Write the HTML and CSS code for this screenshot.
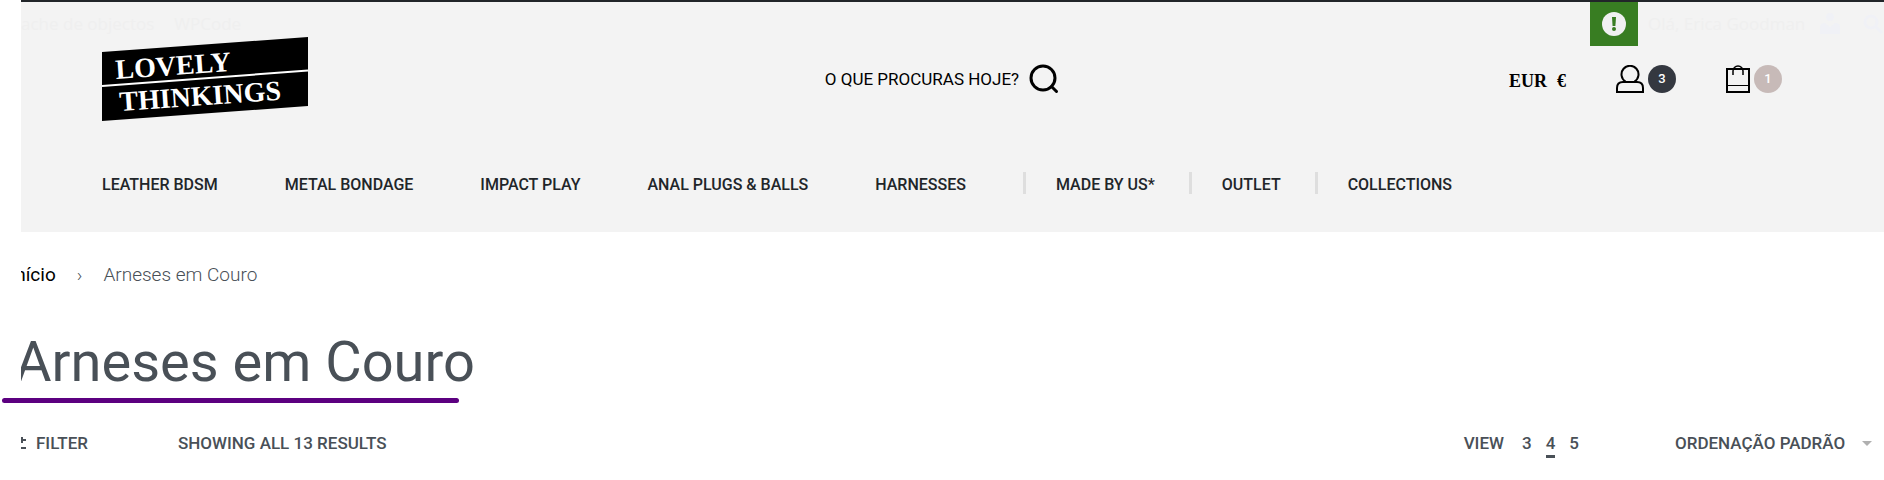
FILE: index.html
```html
<!DOCTYPE html>
<html lang="pt">
<head>
<meta charset="UTF-8">
<meta name="viewport" content="width=device-width, initial-scale=1.0">
<title>Arneses em Couro - Lovely Thinkings</title>
<link rel="stylesheet" href="styles.css">
</head>
<body>

<!-- Header -->
<header class="site-header">
    <div class="admin-bar">
        <a href="#" class="admin-cache">ache de objectos</a>
        <a href="#">WPCode</a>
        <a href="#" class="admin-notice" aria-label="Avisos">
            <svg width="24" height="24" viewBox="0 0 24 24">
                <circle cx="12" cy="12" r="12" fill="#f0f0f1"/>
                <path d="M10 5h4l-.6 9h-2.800z" fill="#387d22"/>
                <circle cx="12" cy="17" r="2" fill="#387d22"/>
            </svg>
        </a>
        <a href="#" class="admin-user">Olá, Erica Goodman</a>
        <svg class="admin-avatar" width="24" height="24" viewBox="0 0 24 24" fill="#f0f1f6">
            <circle cx="12" cy="5" r="4"/>
            <path d="M2 22v-7q0-4 5-4l5 4 5-4q5 0 5 4v7z"/>
        </svg>
        <svg width="22" height="22" viewBox="0 0 22 22" fill="none" stroke="#f0f1f6" stroke-width="3">
            <circle cx="9" cy="9" r="6"/>
            <path d="M13 13l7 7"/>
        </svg>
    </div>

    <div class="header-main">
        <a href="#" class="logo" aria-label="Lovely Thinkings">
            <svg width="206" height="84" viewBox="0 0 206 84">
                <polygon points="0,15 206,0 206,69 0,84" fill="#000"/>
                <path d="M0 49L206 33.500" stroke="#fff" stroke-width="2"/>
                <text transform="translate(14 42) rotate(-4)" class="logo-text">LOVELY</text>
                <text transform="translate(18 74) rotate(-4)" class="logo-text">THINKINGS</text>
            </svg>
        </a>
        <button type="button" class="search">
            O QUE PROCURAS HOJE?
            <svg width="30" height="30" viewBox="0 0 30 30" fill="none" stroke="#000" stroke-width="3" stroke-linecap="round">
                <circle cx="14" cy="14" r="12"/>
                <path d="M22.500 22.500l5 5"/>
            </svg>
        </button>
        <div class="header-tools">
            <button type="button" class="currency"><span>EUR</span><span>€</span></button>
            <a href="#" class="tool" aria-label="Conta">
                <svg width="28" height="28" viewBox="0 0 28 28" fill="none" stroke="#000" stroke-width="2">
                    <path d="M9.500 16.500a8.500 8.500 0 1 1 9 0"/>
                    <path d="M1 27v-4q0-6 6-6h14q6 0 6 6v4z"/>
                </svg>
                <span class="badge">3</span>
            </a>
            <a href="#" class="tool" aria-label="Carrinho">
                <svg width="24" height="28" viewBox="0 0 24 28" fill="none" stroke="#000">
                    <rect x="1" y="4" width="22" height="23" stroke-width="2"/>
                    <path d="M1 20.500h22"/>
                    <path d="M7 10V6a5 5 0 0 1 10 0v4" stroke-width="1.500"/>
                </svg>
                <span class="badge badge-cart">1</span>
            </a>
        </div>
    </div>

    <nav class="main-nav">
        <a href="#">LEATHER BDSM</a>
        <a href="#">METAL BONDAGE</a>
        <a href="#">IMPACT PLAY</a>
        <a href="#">ANAL PLUGS &amp; BALLS</a>
        <a href="#">HARNESSES</a>
        <div class="nav-extra">
            <a href="#">MADE BY US*</a>
            <a href="#">OUTLET</a>
            <a href="#">COLLECTIONS</a>
        </div>
    </nav>
</header>

<!-- Main Content -->
<main>
    <div class="clip">
        <nav class="breadcrumb">
            <a href="#">Início</a>
            <span>›</span>
            <span>Arneses em Couro</span>
        </nav>
        <h1>Arneses em Couro</h1>
    </div>
    <hr class="title-line">
    <div class="clip toolbar">
        <button type="button" class="filter">
            <svg width="16" height="14" viewBox="0 0 16 14" fill="none" stroke="#495057" stroke-width="2">
                <path d="M0 4h16M12 1v6M0 12h16"/>
            </svg>
            FILTER
        </button>
        <p class="results">SHOWING ALL 13 RESULTS</p>
        <div class="view">
            <span>VIEW</span>
            <a href="#">3</a>
            <a href="#" class="active">4</a>
            <a href="#">5</a>
        </div>
        <div class="sort">
            <select aria-label="Ordenar">
                <option>ORDENAÇÃO PADRÃO</option>
            </select>
        </div>
    </div>
</main>

</body>
</html>
```
FILE: styles.css
```css
* {
    box-sizing: border-box;
}

body {
    margin: 0;
    background: #fff;
    color: #495057;
    font-family: Roboto, sans-serif;
    font-size: 17px;
    line-height: 24px;
}

a {
    color: inherit;
    text-decoration: none;
}

button,
select {
    font: inherit;
    color: inherit;
    background: none;
    border: none;
    padding: 0;
    cursor: pointer;
}

svg {
    display: block;
    flex: none;
}

.site-header {
    margin-left: 21px;
    padding-bottom: 35px;
    background: #f3f3f3;
    border-top: 2px solid #212529;
    overflow: hidden;
}

/* Admin bar */
.admin-bar {
    display: flex;
    align-items: center;
    height: 44px;
    color: #efefef;
    font-family: "Open Sans", sans-serif;
    font-size: 17px;
}

.admin-cache {
    margin-right: 20px;
}

.admin-notice {
    display: flex;
    align-items: center;
    justify-content: center;
    width: 48px;
    height: 44px;
    margin-left: auto;
    background: #387d22;
}

.admin-user {
    width: 160px;
    margin: 0 10px;
}

.admin-avatar {
    margin-right: 20px;
}

/* Logo, search, account */
.header-main {
    display: grid;
    grid-template-columns: 1fr auto 1fr;
    align-items: center;
    height: 84px;
    margin: -9px 102px 0 81px;
}

.logo-text {
    font-family: "Liberation Serif", serif;
    font-size: 28px;
    font-weight: bold;
    fill: #fff;
}

.search {
    display: flex;
    align-items: center;
    gap: 10px;
    color: #000;
}

.header-tools {
    display: flex;
    align-items: center;
    justify-content: flex-end;
    color: #000;
}

.currency {
    display: flex;
    gap: 10px;
    margin-right: 50px;
    padding-top: 4px;
    font-family: "Liberation Serif", serif;
    font-size: 18px;
    font-weight: bold;
}

.tool {
    display: flex;
    align-items: center;
    gap: 4px;
}

.tool + .tool {
    margin-left: 50px;
}

.badge {
    width: 28px;
    height: 28px;
    border-radius: 50%;
    background: #343840;
    color: #fff;
    font-size: 13px;
    font-weight: 500;
    line-height: 28px;
    text-align: center;
}

.badge-cart {
    background: #c7bab8;
}

/* Navigation */
.main-nav {
    display: flex;
    align-items: center;
    gap: 67px;
    margin: 52px 0 0 81px;
    color: #212529;
    font-size: 16px;
    font-weight: 500;
    white-space: nowrap;
}

.nav-extra {
    display: flex;
    gap: 34px;
    margin-left: -10px;
}

.nav-extra a {
    display: flex;
    align-items: center;
}

.nav-extra a::before {
    content: "";
    width: 3px;
    height: 22px;
    margin: -4px 30px 0 0;
    background: #dedede;
}

/* Title area */
.clip {
    margin-left: 21px;
    overflow: hidden;
}

.breadcrumb {
    display: flex;
    align-items: center;
    gap: 21px;
    margin: 31px 0 0 -11px;
    font-size: 19px;
    font-weight: 300;
}

.breadcrumb a {
    color: #000;
    font-weight: 400;
}

h1 {
    margin: 39px 0 0 -6px;
    font-size: 56px;
    font-weight: 400;
    line-height: 72px;
}

.title-line {
    width: 457px;
    height: 5px;
    margin: 0 0 0 2px;
    border: none;
    border-radius: 3px;
    background: #5c0080;
}

/* Filter row */
.toolbar {
    display: flex;
    align-items: center;
    height: 40px;
    margin-top: 20px;
    padding-right: 12px;
    font-weight: 500;
}

.filter {
    display: flex;
    align-items: center;
    gap: 10px;
    margin-left: -11px;
}

.results {
    margin: 0 auto 0 90px;
}

.view {
    display: flex;
    gap: 14px;
    margin-right: 96px;
}

.view span {
    margin-right: 4px;
}

.view .active {
    border-bottom: 3px solid #495057;
    margin-bottom: -3px;
}

.sort {
    display: flex;
    align-items: center;
    gap: 16px;
}

.sort select {
    appearance: none;
}

.sort::after {
    content: "";
    border: 5px solid transparent;
    border-top-color: #b0b0b0;
    border-bottom: none;
}
```
